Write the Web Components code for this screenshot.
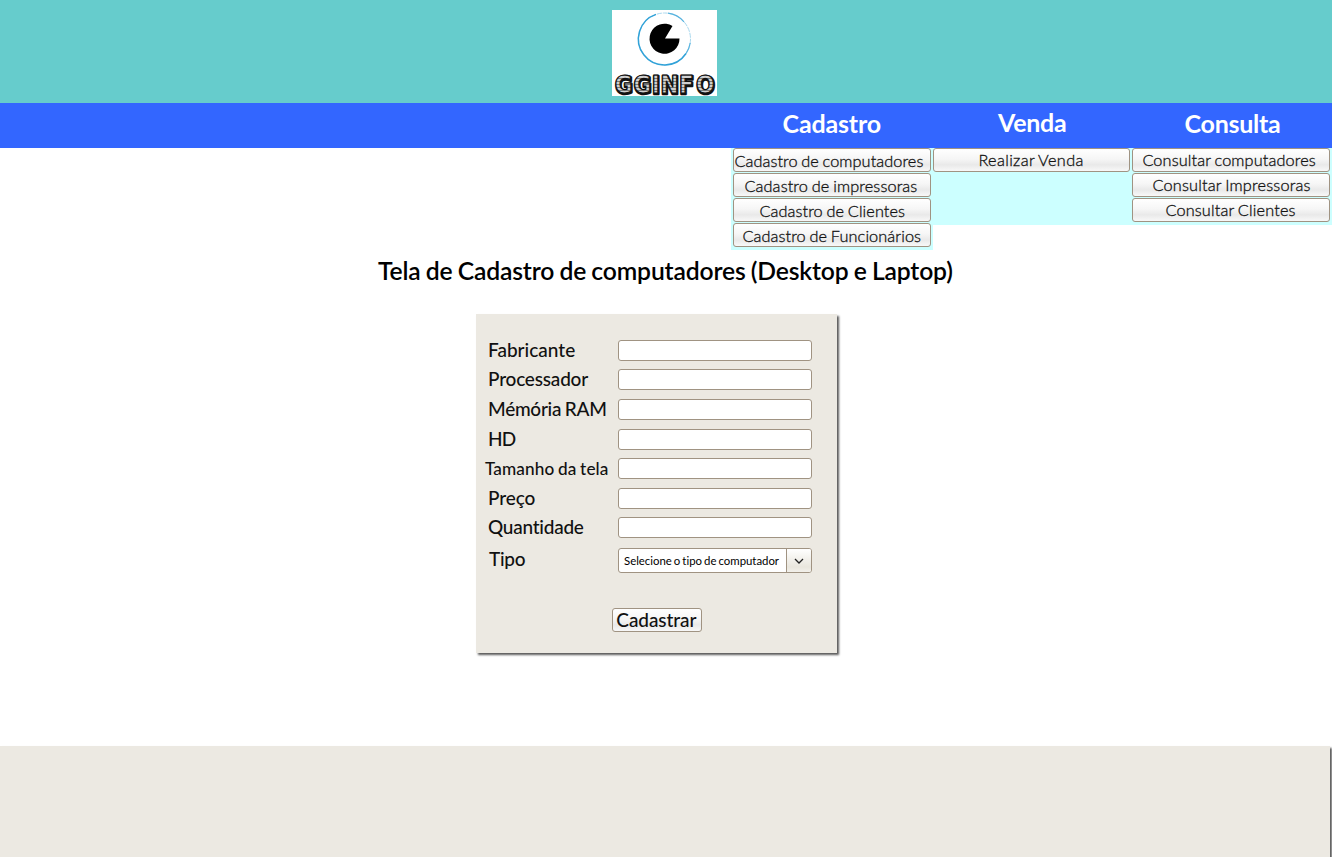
<!DOCTYPE html>
<html lang="pt-BR">
<head>
<meta charset="utf-8">
<title>GGINFO</title>
<style>
html,body{margin:0;padding:0;background:#fff;overflow:hidden}
body{font-family:Lato,"Liberation Sans",sans-serif;color:#111;font-variant-ligatures:none}
</style>
</head>
<body>
<gg-app></gg-app>
<script>
const define = (name, html, setup) => customElements.define(name, class extends HTMLElement {
  constructor() {
    super();
    this.attachShadow({mode: 'open'});
    const t = document.createElement('template');
    t.innerHTML = html;
    this.shadowRoot.append(t.content.cloneNode(true));
  }
  connectedCallback() { if (setup) setup(this); }
});

/* A line of text: x = left indent, dy = top offset, size, weight, w = width the line is tracked to */
define('gg-text', `<style>
:host{display:block;white-space:pre;line-height:24px;word-spacing:-.05em}
:host([weight="300"]){-webkit-text-stroke:.3px currentColor}
p{margin:0}span{display:inline-block}
</style><p><span><slot></slot></span></p>`, el => {
  const a = n => el.getAttribute(n);
  const p = el.shadowRoot.querySelector('p').style, span = el.shadowRoot.querySelector('span');
  p.paddingLeft = (a('x') || 0) + 'px';
  p.marginTop = (a('dy') || 0) + 'px';
  if (a('size')) p.fontSize = a('size') + 'px';
  if (a('weight')) p.fontWeight = a('weight');
  if (a('w')) requestAnimationFrame(() => {
    const now = span.getBoundingClientRect().width;
    span.style.letterSpacing = (a('w') - now) / el.textContent.length + 'px';
  });
});

define('gg-logo', `<style>:host{display:block;width:105px;height:86px;background:#fff}svg{display:block;overflow:visible}
text{font-family:"DejaVu Sans Condensed","DejaVu Sans",sans-serif;font-stretch:condensed;font-weight:700}</style>
<svg width="105" height="86" viewBox="0 0 105 86">
<defs><pattern id="p" width="4" height="3" patternUnits="userSpaceOnUse"><rect width="4" height="3" fill="#d0d0d0"/><rect y="2" width="4" height="1" fill="#777"/></pattern></defs>
<circle cx="52.5" cy="29" r="26" fill="none" stroke="#a9d8ee" stroke-width="1" stroke-dasharray="5 1"/>
<path d="M44 4.4A26 26 0 1 0 74 43.5" fill="none" stroke="#31a2d8" stroke-width="1.5"/>
<path d="M56 3.2A26 26 0 0 1 72 11.8M78.2 33A26 26 0 0 1 74 43.5" fill="none" stroke="#58b3df" stroke-width="1.2"/>
<path d="M53 28.5H67.5A15 15 0 1 1 60.5 16Z" fill="#000"/>
<g font-size="24"><text x="3.2 22 40.3 49 67.5 84.5" y="83.5" fill="#111" stroke="#111" stroke-width="2.6" stroke-linejoin="round">GGINFO</text>
<text x="2.7 21.5 39.8 48.5 67 84" y="82.5" fill="url(#p)" stroke="#111" stroke-width="1.1">GGINFO</text></g>
</svg>`);

define('gg-header', `<style>:host{display:flex;justify-content:center;box-sizing:border-box;height:103px;padding:10px 3px 0 0;background:#6cc}</style><slot></slot>`);

define('gg-nav', `<style>:host{display:grid;grid-template-columns:731px 202px 199px 200px;height:45px;background:#36f;color:#fff}</style><span></span><slot></slot>`);

define('gg-menus', `<style>:host{display:grid;grid-template-columns:202px 199px 200px;align-items:start;padding-left:731px;height:102px;box-sizing:border-box}</style><slot></slot>`);

define('gg-menu', `<style>:host{display:flex;flex-direction:column;gap:1px;box-sizing:border-box;background:#cff;padding:0 2px 3px}
:host([mid]){padding-left:0;height:77px}:host([last]){padding-left:0}</style><slot></slot>`);

define('gg-button', `<style>:host{display:block;box-sizing:border-box;height:24px;border:1px solid #a09382;border-radius:3px;background:linear-gradient(#fff,#f6f6f6 45%,#e9e9e9 72%,#f8f8f8);color:#111;overflow:hidden}</style><slot></slot>`);

define('gg-panel', `<style>:host{display:block;box-sizing:border-box;background:#ece9e2;box-shadow:2px 2px 2px rgba(0,0,0,.65)}</style><slot></slot>`);

define('gg-field', `<style>:host{display:grid;grid-template-columns:142px 194px;align-items:start;height:21px}
i{display:block;box-sizing:border-box;height:21px;border:1px solid #a09382;border-radius:3px;background:#fff}</style><slot></slot><i></i>`);

define('gg-select', `<style>:host{display:grid;grid-template-columns:167px 25px;box-sizing:border-box;width:194px;height:25px;border:1px solid #a09382;border-radius:3px;background:#fff;overflow:hidden;color:#000}
b{display:flex;align-items:center;justify-content:center;border-left:1px solid #a09382;background:linear-gradient(#fff,#f0eee8 50%,#e9e6dd 75%,#f4f2ed)}</style>
<slot></slot><b><svg width="10" height="7" viewBox="0 0 10 7"><path d="M1 1l4 4 4-4" fill="none" stroke="#222" stroke-width="1.3"/></svg></b>`);

define('gg-app', `<style>
:host{display:flex;flex-direction:column;width:1332px;height:857px;overflow:hidden}
gg-header,gg-nav,gg-menus{flex:none}
.title{display:flow-root;height:64px;flex:none;color:#000}
.form{width:361px;height:339px;margin-left:476px;flex:none;padding-top:26px}
.rows{display:flex;flex-direction:column}
.type{display:grid;grid-template-columns:142px 194px;height:25px;margin-top:10px}
.send{width:90px;margin:35px 0 0 136px;color:#111}
.foot{width:1330px;height:120px;flex:none;margin-top:93px}
</style>
<gg-header><gg-logo></gg-logo></gg-header>
<gg-nav>
<gg-text x="51.5" dy="8" size="25" weight="700" w="98.5">Cadastro</gg-text>
<gg-text x="65" dy="7" size="25" weight="700" w="68.5">Venda</gg-text>
<gg-text x="52.5" dy="8" size="25" weight="700" w="96">Consulta</gg-text>
</gg-nav>
<gg-menus>
<gg-menu>
<gg-button><gg-text x="0.4" size="16.3" weight="300" w="189">Cadastro de computadores</gg-text></gg-button>
<gg-button><gg-text x="10.4" size="16.3" weight="300" w="173">Cadastro de impressoras</gg-text></gg-button>
<gg-button><gg-text x="25.4" size="16.3" weight="300" w="145.7">Cadastro de Clientes</gg-text></gg-button>
<gg-button><gg-text x="8.4" size="16.3" weight="300" w="178.7">Cadastro de Funcionários</gg-text></gg-button>
</gg-menu>
<gg-menu mid><gg-button><gg-text x="44.4" dy="-1" size="16.3" weight="300" w="105.3">Realizar Venda</gg-text></gg-button></gg-menu>
<gg-menu last>
<gg-button><gg-text x="9.4" dy="-1" size="16.3" weight="300" w="173.5">Consultar computadores</gg-text></gg-button>
<gg-button><gg-text x="19.4" dy="-1" size="16.3" weight="300" w="158.3">Consultar Impressoras</gg-text></gg-button>
<gg-button><gg-text x="32.4" dy="-1" size="16.3" weight="300" w="130.3">Consultar Clientes</gg-text></gg-button>
</gg-menu>
</gg-menus>
<gg-text class="title" x="378" dy="9" size="24.7" weight="600" w="574.7">Tela de Cadastro de computadores (Desktop e Laptop)</gg-text>
<gg-panel class="form">
<div class="rows">
<gg-field><gg-text x="12" dy="-2" size="19" weight="500" w="87.2">Fabricante</gg-text></gg-field>
<gg-field style="margin-top:8px"><gg-text x="12" dy="-2" size="19" weight="500" w="100">Processador</gg-text></gg-field>
<gg-field style="margin-top:9px"><gg-text x="12" dy="-2" size="19" weight="500" w="118.7">Mémória RAM</gg-text></gg-field>
<gg-field style="margin-top:9px"><gg-text x="12" dy="-2" size="19" weight="500" w="27.3">HD</gg-text></gg-field>
<gg-field style="margin-top:8px"><gg-text x="9" dy="-1" size="17.2" weight="500" w="123.5">Tamanho da tela</gg-text></gg-field>
<gg-field style="margin-top:9px"><gg-text x="12" dy="-2" size="19" weight="500" w="47.3">Preço</gg-text></gg-field>
<gg-field style="margin-top:8px"><gg-text x="12" dy="-2" size="19" weight="500" w="95.7">Quantidade</gg-text></gg-field>
</div>
<div class="type"><gg-text x="13" dy="-1" size="19" weight="500" w="36.3">Tipo</gg-text><gg-select><gg-text x="5" size="11.4" weight="400" w="155">Selecione o tipo de computador</gg-text></gg-select></div>
<gg-button class="send"><gg-text x="3.3" dy="-1" size="19" weight="500" w="80">Cadastrar</gg-text></gg-button>
</gg-panel>
<gg-panel class="foot"></gg-panel>`);
</script>
</body>
</html>
